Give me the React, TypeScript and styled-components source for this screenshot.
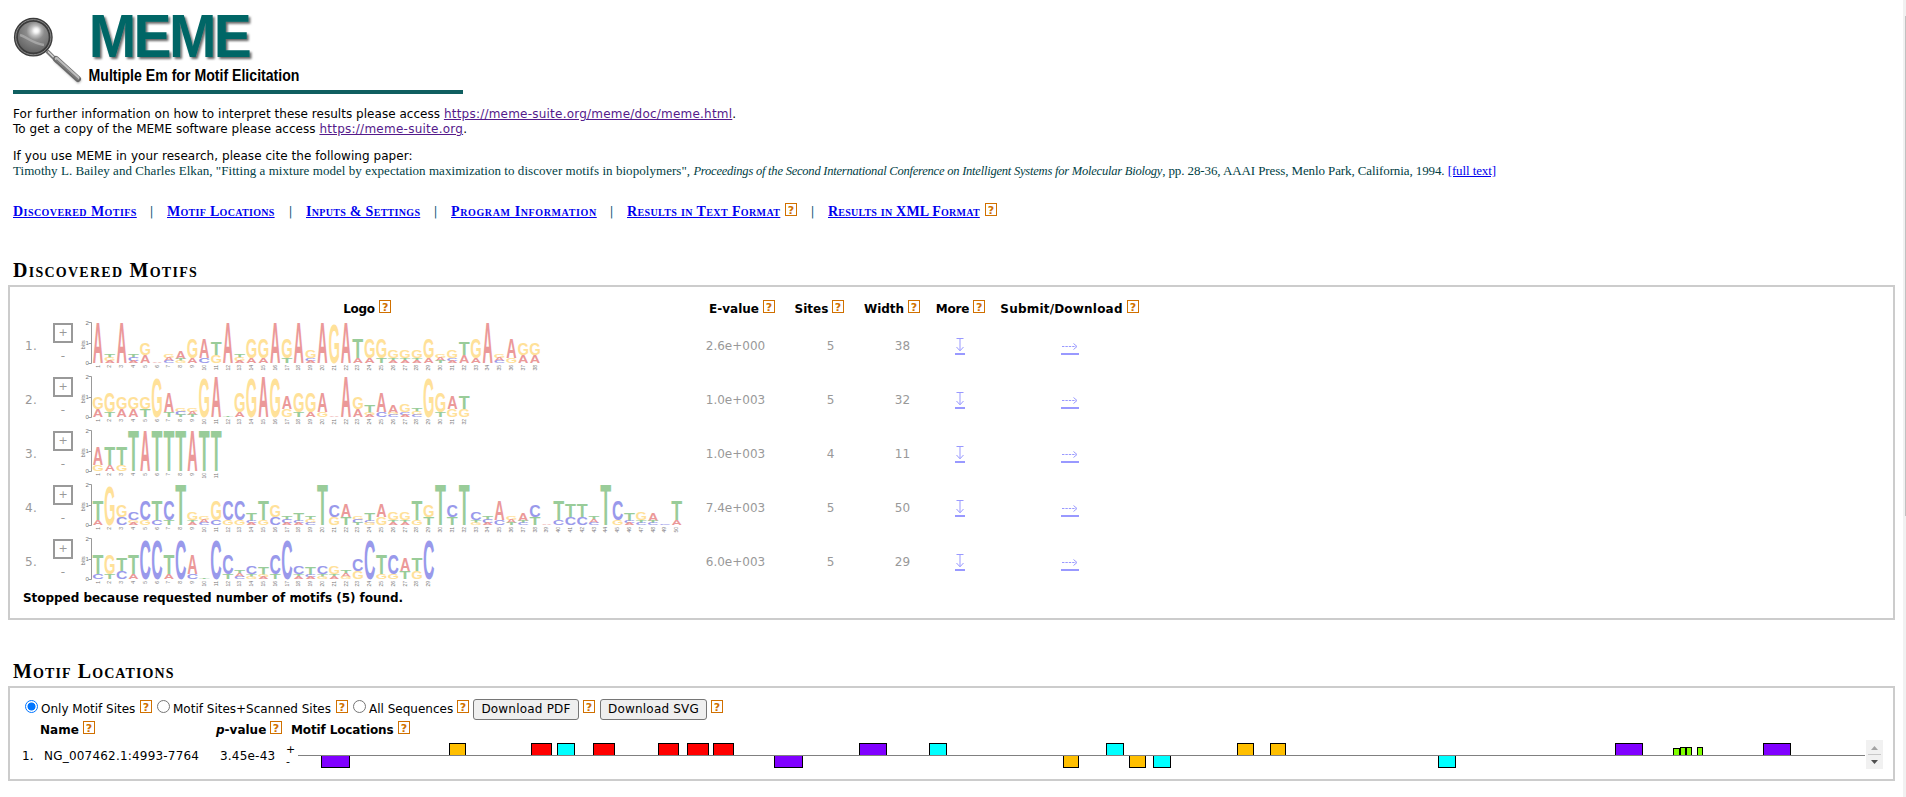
import React from 'react';
import styled, { createGlobalStyle } from 'styled-components';

const SANS = '"DejaVu Sans", Verdana, sans-serif';
const SERIF = '"Liberation Serif", "Times New Roman", serif';

const GlobalStyle = createGlobalStyle`
  *, *::before, *::after { box-sizing: border-box; }
  html, body { margin: 0; background: #fff; overflow: hidden; }
  body { font: 12px/15px ${SANS}; color: #000; }
  svg { display: block; }
`;

const Shell = styled.div`
  display: flex;
  height: 797px;
  width: 1906px;
  overflow: hidden;
`;

const Page = styled.main`
  flex: 1;
  min-width: 0;
  padding: 8px 8px 0;
`;

const ScrollTrack = styled.div`
  width: 3px;
  background: #f1f1f1;
  padding: 16px 0 0 2px;
`;

const ScrollThumb = styled.div`
  height: 500px;
  background: #c1c1c1;
`;

const Banner = styled.header`
  width: 450px;
  height: 86px;
  margin-left: 5px;
  border-bottom: 4px solid #0f5f60;
`;

const Intro = styled.div`
  margin: 13px 0 0 5px;
`;

const Para = styled.p<{ $gap?: number; $ls?: number }>`
  margin: ${p => p.$gap ?? 0}px 0 0;
  letter-spacing: ${p => p.$ls ?? 0}px;
  white-space: pre;
`;

const VisitedLink = styled.a<{ $ls?: number }>`
  color: #551a8b;
  text-decoration: underline;
  letter-spacing: ${p => p.$ls ?? 0}px;
`;

const Citation = styled.p`
  margin: -1px 0 0;
  height: 17px;
  white-space: pre;
  font: 13px/16px ${SERIF};
  color: #004044;
  letter-spacing: 0.05px;
`;

const Journal = styled.i`
  font-size: 12.5px;
  letter-spacing: -0.22px;
`;

const CitationTail = styled.span`
  letter-spacing: -0.1px;
`;

const FullText = styled.a`
  color: #0000ee;
  text-decoration: underline;
  letter-spacing: -0.1px;
`;

const Nav = styled.nav`
  display: flex;
  align-items: baseline;
  height: 18px;
  margin: 23px 0 0 5px;
  line-height: 18px;
`;

const NavLink = styled.a<{ $width: number; $ls: number }>`
  flex: none;
  width: ${p => p.$width}px;
  font: bold small-caps 14px/18px ${SERIF};
  letter-spacing: ${p => p.$ls}px;
  white-space: nowrap;
  color: #0000ee;
  text-decoration: underline;
`;

const NavRule = styled.span`
  width: 31px;
  text-align: center;
  color: #1c5d80;
`;

const HelpBox = styled.svg<{ $left?: number; $right?: number }>`
  flex: none;
  margin-left: ${p => p.$left ?? 4}px;
  margin-right: ${p => p.$right ?? 0}px;
`;

const SectionTitle = styled.h2<{ $top: number; $ls: number }>`
  margin: ${p => p.$top}px 0 0 5px;
  height: 28px;
  font: bold small-caps 20px/26px ${SERIF};
  letter-spacing: ${p => p.$ls}px;
`;

const Panel = styled.section<{ $height: number }>`
  width: 1887px;
  height: ${p => p.$height}px;
  border: 2px solid #ccc;
`;

const MotifGrid = styled.div`
  display: grid;
  grid-template-columns: 43px 27px 620px 84px 71px 74px 63px 155px;
`;

const HeadRow = styled(MotifGrid)`
  height: 32px;
  padding-top: 13px;
`;

const HeadCell = styled.div<{ $padRight?: number; $ls?: number }>`
  display: flex;
  justify-content: center;
  align-items: baseline;
  height: 15px;
  padding-right: ${p => p.$padRight ?? 0}px;
  font-weight: bold;
  letter-spacing: ${p => p.$ls ?? 0}px;
  white-space: nowrap;
`;

const MotifRow = styled(MotifGrid)`
  height: 54px;
  align-items: center;
  color: #999;
`;

const Index = styled.div`
  padding-left: 15px;
  letter-spacing: 0.4px;
`;

const Strand = styled.div`
  align-self: start;
  width: 20px;
  padding-top: 4px;
  text-align: center;
`;

const PlusButton = styled.div`
  width: 20px;
  height: 20px;
  border: 2px solid #999;
  line-height: 16px;
  font-size: 11px;
`;

const Minus = styled.div`
  padding-top: 6px;
`;

const Value = styled.div<{ $left?: number; $right?: number }>`
  text-align: center;
  padding-left: ${p => p.$left ?? 0}px;
  padding-right: ${p => p.$right ?? 0}px;
`;

const IconCell = styled.div<{ $right?: number }>`
  display: flex;
  justify-content: center;
  padding-right: ${p => p.$right ?? 0}px;
`;

const StopNote = styled.div`
  padding: 2px 0 0 13px;
  font-weight: bold;
  letter-spacing: -0.04px;
`;

const Controls = styled.div`
  display: flex;
  align-items: baseline;
  height: 32px;
  padding: 11px 0 0 15px;
  white-space: nowrap;
`;

const Radio = styled.span<{ $on?: boolean }>`
  flex: none;
  width: 13px;
  height: 13px;
  border: 1px solid ${p => (p.$on ? '#0075ff' : '#767676')};
  border-radius: 50%;
  background: ${p => (p.$on ? 'radial-gradient(circle, #0075ff 0 3.6px, #fff 4.4px)' : '#fff')};
`;

const RadioText = styled.label<{ $width: number; $ls?: number }>`
  flex: none;
  width: ${p => p.$width}px;
  margin-left: 3px;
  letter-spacing: ${p => p.$ls ?? 0}px;
`;

const Button = styled.button<{ $width: number; $left: number }>`
  width: ${p => p.$width}px;
  height: 21px;
  margin-left: ${p => p.$left}px;
  padding: 0;
  border: 1px solid #767676;
  border-radius: 3px;
  background: #efefef;
  font: 12px/17px ${SANS};
  letter-spacing: 0.2px;
  color: #000;
`;

const LocHead = styled.div`
  display: grid;
  grid-template-columns: 30px 176px 75px 300px;
  height: 20px;
  padding-top: 1px;
`;

const LocHeadCell = styled(HeadCell)`
  justify-content: flex-start;
`;

const LocRow = styled.div`
  display: flex;
  height: 29px;
  align-items: center;
  padding-left: 12px;
`;

const LocText = styled.div<{ $width: number; $ls?: number }>`
  width: ${p => p.$width}px;
  padding-top: 3px;
  letter-spacing: ${p => p.$ls ?? 0}px;
`;

const StrandSigns = styled.div`
  width: 12px;
  padding-top: 3px;
  font-size: 11px;
  line-height: 12px;
`;

const Stepper = styled.div`
  width: 17px;
  height: 29px;
  margin-left: 1px;
  background: #f1f1f1;
`;

function Help({ left, right }: { left?: number; right?: number }) {
  return (
    <HelpBox width="12" height="13" $left={left} $right={right} viewBox="0 0 12 13">
      <rect x="0.5" y="0.5" width="11" height="12" fill="#fff" stroke="#d07000" />
      <text x="6" y="10.5" fontSize="11" fontWeight="bold" textAnchor="middle" fill="#d07000" fontFamily="DejaVu Sans, sans-serif">?</text>
    </HelpBox>
  );
}

/* Ink box of each capital at a font size of 100: left, width, bottom overshoot, height. */
const GLYPHS: Record<string, { left: number; width: number; drop: number; height: number; color: string }> = {
  A: { left: 0.5, width: 71, drop: 0, height: 68.8, color: '#eb9999' },
  C: { left: 4, width: 64.5, drop: 1, height: 70.8, color: '#9999eb' },
  G: { left: 4, width: 69, drop: 1, height: 70.8, color: '#ffe199' },
  T: { left: 2, width: 57, drop: 0, height: 68.8, color: '#99cc99' },
};

/* Pixel height of a full stack, keyed by the site counts it is made of. */
const STACK: Record<string, number> = { '5': 39, '41': 24.4, '32': 20, '311': 12, '221': 9.3, '4': 39, '31': 23.6, '2': 1.1 };

const PITCH = 11.81;
const BASE = 44.3;

function Logo({ columns }: { columns: string }) {
  const cols = columns.split(' ');
  return (
    <svg width="620" height="54" viewBox="0 0 620 54">
      <g stroke="#999" strokeWidth="1" fill="none">
        <path d="M11.5 3.5V44.5M8.5 3.5h3M8.5 24.5h3M8.5 44.5h3" />
      </g>
      <g fontFamily="Liberation Sans, Arial, sans-serif" fontSize="6" fill="#777">
        <text x="5.6" y="6">2</text>
        <text x="5.6" y="26">1</text>
        <text x="5.6" y="46">0</text>
        <text transform="translate(5.4 30.5) rotate(-90)">bits</text>
        {cols.map((_, i) => (
          <text key={i} transform={`translate(${19.6 + i * PITCH} 46) rotate(-90)`} textAnchor="end" fontSize="5">{i + 1}</text>
        ))}
      </g>
      <g fontFamily="Liberation Sans, Arial, sans-serif" fontWeight="bold" fontSize="100">
        {cols.map((col, i) => {
          const counts = col.replace(/[A-Z]/g, '');
          const total = STACK[counts];
          const sum = counts.split('').reduce((a, b) => a + Number(b), 0);
          const cx = 18 + i * PITCH;
          let top = BASE - total;
          return (col.match(/[A-Z]\d/g) ?? []).map((part, k) => {
            const g = GLYPHS[part[0]];
            const h = (total * Number(part[1])) / sum;
            top += h;
            const sx = 10.2 / g.width;
            const sy = h / g.height;
            return (
              <text key={`${i}-${k}`} fill={g.color} transform={`translate(${cx - 5.1 - g.left * sx} ${top - g.drop * sy}) scale(${sx} ${sy})`}>
                {part[0]}
              </text>
            );
          });
        })}
      </g>
    </svg>
  );
}

const MOTIFS = [
  {
    evalue: '2.6e+000', sites: 5, width: 38,
    columns: 'A5 T2G2A1 A5 T2C2A1 G3A2 A2 G2A2C1 A3T1G1 G4A1 A4C1 T3G2 A5 T2G2A1 G4A1 G4A1 A5 G4T1 A5 G3C1A1 A5 G5 A5 T4A1 G4A1 G4T1 G3T1A1 G3T1A1 G3T1A1 G4A1 G2A2T1 G3C1A1 T3A2 G4A1 A5 G2A2C1 A4G1 G3A2 G3A2',
  },
  {
    evalue: '1.0e+003', sites: 5, width: 32,
    columns: 'G3A2 G4T1 G3A2 G3A2 G3T2 G5 A4T1 G2C2T1 G2A2T1 G5 A5 T2 G4A1 G5 A5 G5 A3G2 G4T1 G4A1 A4G1 A2 A5 G3A2 T3G1A1 A4C1 A3G1C1 G3C1A1 T2G2C1 G5 G4T1 A3G2 T3G2',
  },
  { evalue: '1.0e+003', sites: 4, width: 11, columns: 'A3G1 T3A1 T3G1 T4 A4 T4 T4 T4 A4 T4 T4' },
  {
    evalue: '7.4e+003', sites: 5, width: 50,
    columns: 'T4A1 G5 G3C2 C3G1A1 C4G1 T4C1 C4T1 T5 G3T1A1 G2A2C1 G4C1 C4G1 C4G1 T3C1A1 T4G1 G3C2 T2C2A1 T3C1A1 T2G2C1 T5 C3G2 A3T2 G2C2T1 T3C1G1 A3G2 G3T1A1 G3T1A1 T4G1 G3T2 T5 C3T2 T5 C3T1G1 T2C2A1 A4C1 G2A2T1 A3T1C1 C3T2 A2 T4C1 T3C2 T3C2 T2A2C1 T5 C4G1 T3C1A1 G3T1C1 A3T1C1 C2 T4A1',
  },
  {
    evalue: '6.0e+003', sites: 5, width: 29,
    columns: 'T4C1 G4T1 T3C2 T4A1 C5 C5 T4A1 C5 A4C1 T2 C5 C4T1 T2A2C1 C3T1G1 T3G1A1 C4T1 C5 C3T1A1 T3C1A1 C3T1G1 G3T1A1 T2A2G1 C3G2 C5 T4G1 C4G1 A3T2 T3G2 C5',
  },
];

type Site = { x: number; w: number; color: string; down?: boolean; h?: number };
const RED = '#ff0000', CYAN = '#00ffff', ORANGE = '#ffbf00', PURPLE = '#8000ff', GREEN = '#80ff00';
const SITES: Site[] = [
  { x: 321, w: 29, color: PURPLE, down: true },
  { x: 449, w: 17, color: ORANGE },
  { x: 531, w: 21, color: RED },
  { x: 557, w: 18, color: CYAN },
  { x: 593, w: 22, color: RED },
  { x: 658, w: 21, color: RED },
  { x: 687, w: 22, color: RED },
  { x: 713, w: 21, color: RED },
  { x: 774, w: 29, color: PURPLE, down: true },
  { x: 859, w: 28, color: PURPLE },
  { x: 929, w: 18, color: CYAN },
  { x: 1063, w: 16, color: ORANGE, down: true },
  { x: 1106, w: 18, color: CYAN },
  { x: 1129, w: 17, color: ORANGE, down: true },
  { x: 1153, w: 18, color: CYAN, down: true },
  { x: 1237, w: 17, color: ORANGE },
  { x: 1270, w: 16, color: ORANGE },
  { x: 1438, w: 18, color: CYAN, down: true },
  { x: 1615, w: 28, color: PURPLE },
  { x: 1673, w: 7, color: GREEN, h: 7 },
  { x: 1680, w: 6, color: GREEN, h: 8 },
  { x: 1686, w: 6, color: GREEN, h: 8 },
  { x: 1697, w: 6, color: GREEN, h: 8 },
  { x: 1763, w: 28, color: PURPLE },
];

function LocationTrack() {
  return (
    <svg width="1567" height="29" viewBox="298 740 1567 29">
      {SITES.map(s => {
        const h = s.h ?? 12;
        return (
          <rect key={s.x} x={s.x + 0.5} y={(s.down ? 755 : 755 - h) + 0.5} width={s.w - 1} height={h} fill={s.color} stroke="#000" />
        );
      })}
      <path d="M298 755.5H1865" stroke="#808080" />
    </svg>
  );
}

function BannerArt() {
  return (
    <svg width="450" height="82" viewBox="13 8 450 82">
      <defs>
        <radialGradient id="glass" cx="0.56" cy="0.32" r="0.65">
          <stop offset="0" stopColor="#f8f8f8" />
          <stop offset="0.16" stopColor="#d0d0d0" />
          <stop offset="0.4" stopColor="#8c8c8c" />
          <stop offset="1" stopColor="#606060" />
        </radialGradient>
        <filter id="drop" x="-10%" y="-10%" width="130%" height="130%">
          <feDropShadow dx="2" dy="2" stdDeviation="1.3" floodColor="#000" floodOpacity="0.6" />
        </filter>
        <filter id="soft" x="-20%" y="-20%" width="140%" height="140%">
          <feGaussianBlur stdDeviation="1" />
        </filter>
      </defs>
      <path d="M55 59L80 82" stroke="#000" strokeOpacity="0.3" strokeWidth="5" filter="url(#soft)" />
      <path d="M47 51L58 62" stroke="#777" strokeWidth="4" />
      <path d="M48 51.5L58 61.5" stroke="#d5d5d5" strokeWidth="1.5" />
      <path d="M56 59L78 79" stroke="#6a6a6a" strokeWidth="6" strokeLinecap="round" />
      <path d="M56.4 58.6L77.8 77.8" stroke="#bdbdbd" strokeWidth="3.4" strokeLinecap="round" />
      <path d="M56.2 59.8L78 79.6" stroke="#777" strokeWidth="1.4" />
      <circle cx="33.3" cy="37.2" r="17.4" fill="url(#glass)" stroke="#3c3c3c" strokeWidth="4" />
      <circle cx="33.3" cy="37.2" r="17.6" fill="none" stroke="#8a8a8a" strokeWidth="1" />
      <path d="M20 35C27 37 32 43 44 45" fill="none" stroke="#b4b4b4" strokeWidth="2.4" strokeOpacity="0.7" />
      <circle cx="36.5" cy="30.5" r="3" fill="#fff" fillOpacity="0.9" filter="url(#soft)" />
      <text transform="translate(88.8 57) scale(0.935 1)" filter="url(#drop)" fontFamily="Liberation Sans, Arial, sans-serif" fontWeight="bold" fontSize="61" letterSpacing="-2.9" fill="#006666">MEME</text>
      <text x="88.5" y="81" textLength="211" lengthAdjust="spacingAndGlyphs" fontFamily="Liberation Sans, Arial, sans-serif" fontWeight="bold" fontSize="16.5" fill="#000">Multiple Em for Motif Elicitation</text>
    </svg>
  );
}

function DownIcon() {
  return (
    <svg width="10" height="18" viewBox="0 0 10 18" fill="none" stroke="#9999ff">
      <path d="M1.5 1.5h7M5 1.5v12M1.5 10L5 13.8L8.5 10" />
      <path d="M0 17h10" strokeWidth="2" />
    </svg>
  );
}

function RightIcon() {
  return (
    <svg width="18" height="18" viewBox="0 0 18 18" fill="none" stroke="#9999ff">
      <path d="M1 9.5h14" strokeDasharray="2.4 1" />
      <path d="M12.5 6.5L16 9.5L12.5 12.5" />
      <path d="M0 17h18" strokeWidth="2" />
    </svg>
  );
}

export default function App() {
  return (
    <Shell>
      <GlobalStyle />
      <Page>
        <Banner><BannerArt /></Banner>
        <Intro>
          <Para $ls={0.03}>
            {'For further information on how to interpret these results please access '}
            <VisitedLink $ls={0.22}>https://meme-suite.org/meme/doc/meme.html</VisitedLink>.
          </Para>
          <Para $ls={0.03}>
            {'To get a copy of the MEME software please access '}
            <VisitedLink $ls={0.25}>https://meme-suite.org</VisitedLink>.
          </Para>
          <Para $gap={12} $ls={0.05}>If you use MEME in your research, please cite the following paper:</Para>
          <Citation>
            {'Timothy L. Bailey and Charles Elkan, "Fitting a mixture model by expectation maximization to discover motifs in biopolymers", '}
            <Journal>Proceedings of the Second International Conference on Intelligent Systems for Molecular Biology</Journal>
            <CitationTail>{', pp. 28-36, AAAI Press, Menlo Park, California, 1994. '}</CitationTail>
            <FullText>[full text]</FullText>
          </Citation>
        </Intro>

        <Nav>
          <NavLink $width={123} $ls={0.44}>Discovered Motifs</NavLink>
          <NavRule>|</NavRule>
          <NavLink $width={108} $ls={0.3}>Motif Locations</NavLink>
          <NavRule>|</NavRule>
          <NavLink $width={114} $ls={0.3}>Inputs &amp; Settings</NavLink>
          <NavRule>|</NavRule>
          <NavLink $width={145} $ls={0.62}>Program Information</NavLink>
          <NavRule>|</NavRule>
          <NavLink $width={153} $ls={0.38}>Results in Text Format</NavLink>
          <Help left={5} />
          <NavRule>|</NavRule>
          <NavLink $width={153} $ls={0.22}>Results in XML Format</NavLink>
          <Help left={4} />
        </Nav>

        <SectionTitle $top={36} $ls={1.26}>Discovered Motifs</SectionTitle>
        <Panel $height={335}>
          <HeadRow>
            <span />
            <span />
            <HeadCell $padRight={46} $ls={-0.3}>Logo<Help /></HeadCell>
            <HeadCell>E-value<Help /></HeadCell>
            <HeadCell>Sites<Help /></HeadCell>
            <HeadCell>Width<Help /></HeadCell>
            <HeadCell $ls={-0.2}>More<Help /></HeadCell>
            <HeadCell $ls={0.2}>Submit/Download<Help /></HeadCell>
          </HeadRow>
          {MOTIFS.map((m, i) => (
            <MotifRow key={i}>
              <Index>{i + 1}.</Index>
              <Strand>
                <PlusButton>+</PlusButton>
                <Minus>-</Minus>
              </Strand>
              <Logo columns={m.columns} />
              <Value $right={13}>{m.evalue}</Value>
              <Value $left={22}>{m.sites}</Value>
              <Value $left={21}>{m.width}</Value>
              <IconCell $right={1}><DownIcon /></IconCell>
              <IconCell><RightIcon /></IconCell>
            </MotifRow>
          ))}
          <StopNote>Stopped because requested number of motifs (5) found.</StopNote>
        </Panel>

        <SectionTitle $top={38} $ls={1.1}>Motif Locations</SectionTitle>
        <Panel $height={95}>
          <Controls>
            <Radio $on />
            <RadioText $width={95}>Only Motif Sites</RadioText>
            <Help left={4} right={5} />
            <Radio />
            <RadioText $width={158}>Motif Sites+Scanned Sites</RadioText>
            <Help left={5} right={5} />
            <Radio />
            <RadioText $width={84}>All Sequences</RadioText>
            <Help left={4} />
            <Button $width={106} $left={4}>Download PDF</Button>
            <Help left={4} />
            <Button $width={107} $left={5}>Download SVG</Button>
            <Help left={4} />
          </Controls>
          <LocHead>
            <span />
            <LocHeadCell>Name<Help /></LocHeadCell>
            <LocHeadCell><i>p</i>-value<Help /></LocHeadCell>
            <LocHeadCell $ls={-0.12}>Motif Locations<Help /></LocHeadCell>
          </LocHead>
          <LocRow>
            <LocText $width={22}>1.</LocText>
            <LocText $width={176} $ls={0.2}>NG_007462.1:4993-7764</LocText>
            <LocText $width={66} $ls={0.2}>3.45e-43</LocText>
            <StrandSigns>+<br />-</StrandSigns>
            <LocationTrack />
            <Stepper>
              <svg width="17" height="29" viewBox="0 0 17 29">
                <path d="M5 10h7L8.5 6z" fill="#a3a3a3" />
                <path d="M2 14.5h13" stroke="#c8c8c8" />
                <path d="M5 20h7L8.5 24z" fill="#505050" />
              </svg>
            </Stepper>
          </LocRow>
        </Panel>
      </Page>
      <ScrollTrack><ScrollThumb /></ScrollTrack>
    </Shell>
  );
}
